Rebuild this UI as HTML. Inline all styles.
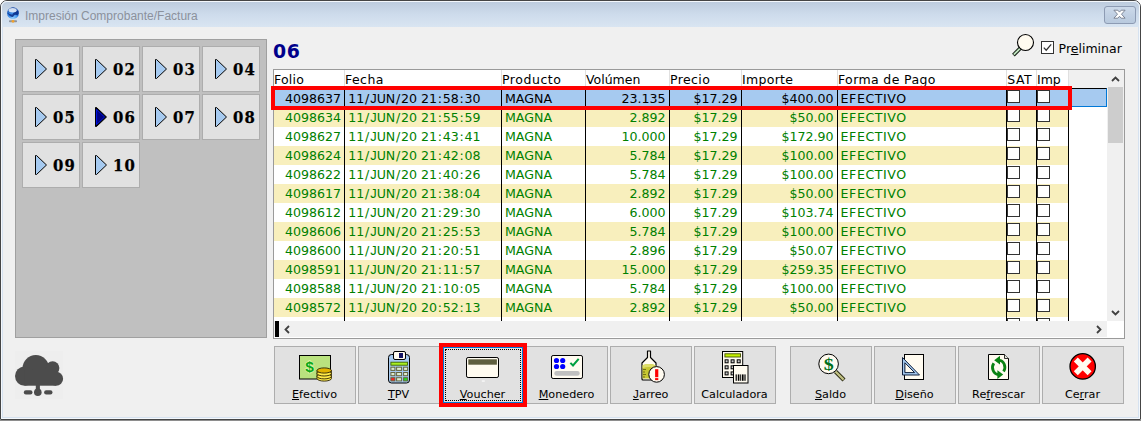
<!DOCTYPE html><html lang="es"><head><meta charset="utf-8"><title>Impresión Comprobante/Factura</title><style>
*{box-sizing:border-box}
html,body{margin:0;padding:0;background:#fff;width:1141px;height:421px;overflow:hidden}
body{position:relative;font-family:"DejaVu Sans","Liberation Sans",sans-serif;font-size:12.5px;color:#000}
#win{position:absolute;left:0;top:0;width:1141px;height:421px;overflow:hidden;background:linear-gradient(#fff 419px,#8e8e8e 420px)}
#frame{position:absolute;left:0;top:0;width:1141px;height:420px;border:1px solid #454545;border-radius:7px 7px 1px 1px;background:#d6e2f0}
#hl{position:absolute;left:1px;top:1px;width:1139px;height:418px;border:1px solid #f4f8fc;border-radius:6px 6px 0 0;z-index:5}
#title{position:absolute;left:1px;top:1px;width:1139px;height:26px;background:linear-gradient(#bccbdd,#cddbeb 50%,#d9e5f2);border-radius:6px 6px 0 0}
#ticon{position:absolute;left:5px;top:6px}
#ttext{position:absolute;left:24px;top:8px;font-family:"Liberation Sans",sans-serif;font-size:12px;color:#8b919c;white-space:nowrap}
#close{position:absolute;left:1103px;top:5px;width:32px;height:18px;border:1px solid #8d9bb3;border-radius:3px;background:linear-gradient(#cddaea,#c1d0e3 50%,#b9cade)}
#close svg{position:absolute;left:8px;top:2px}
#clientbg{position:absolute;left:3px;top:27px;width:1135px;height:390px;background:#f0f0f0}
#client{position:absolute;left:0;top:0;width:1141px;height:421px}
#client>*{position:absolute}
#panel{left:15px;top:39px;width:252px;height:299px;background:#c0c0c0;border:1px solid #a0a0a0}
.pb{position:absolute;width:58px;height:46px;background:#e1e1e1;border:1px solid #adadad;margin:-40px 0 0 -16px}
.tri{position:absolute;left:11px;top:11px}
.pn{position:absolute;left:30px;top:13px;letter-spacing:1.2px;-webkit-text-stroke:.25px #000;font-family:"DejaVu Serif Condensed","DejaVu Serif","Liberation Serif",serif;font-weight:bold;font-size:16.5px;line-height:20px;white-space:nowrap}
#cloud{left:14px;top:350px}
#big{left:273px;top:40px;letter-spacing:.7px;font-weight:bold;font-size:18.9px;line-height:22px;color:#00008b;white-space:nowrap}
#mag{left:1010px;top:32px}
#chk{left:1041px;top:41px;width:13px;height:13px}
#chk svg{display:block}
#prel{left:1058.6px;top:41px;font-size:12.5px;line-height:16px;white-space:nowrap}
#grid{left:273px;top:69px;width:852px;height:270px;background:#fff;border:1px solid #9a9a9a;overflow:hidden}
#grid>*{position:absolute}
#hdr{left:0;top:0;width:795px;height:19px;background:#fff}
#hfill{left:795px;top:0;width:39px;height:19px;background:#f0f0f0}
.hsep{top:0;width:1px;height:19px;background:#e0e0e0;margin-left:-1px}
.hc{top:1px;line-height:17px;white-space:nowrap}
.row{left:0;width:795px;height:19px;background:#fff;color:#008000}
.row.alt{background:#f8efbd}
.row.sel{background:#a6caf0;color:#000}
.c{position:absolute;top:1px;line-height:17px;white-space:nowrap;font-size:12.6px}
.c i{font-style:normal;padding:0 .73px}
.c b{font-weight:normal;font-family:"Liberation Sans",sans-serif;font-size:12.9px;padding:0 0 0 .3px}
.c.r{text-align:right}
.cb{position:absolute;top:1px;width:13px;height:13px;background:#fff;border:1px solid #333;display:block}
.vl{top:19px;width:1px;height:232px;background:#000;margin-left:-1px}
#selx{left:795px;top:18px;width:38px;height:19px;background:#a6caf0;border-top:1px solid #000;border-right:1px solid #0078d7;border-bottom:1px solid #0078d7}
#vsb{left:833px;top:0;width:17px;height:251px;background:#f0f0f0}
#vth{position:absolute;left:1px;top:17px;width:15px;height:56px;background:#cdcdcd}
.ch{position:absolute}
#hsb{left:0;top:251px;width:833px;height:16px;background:#f0f0f0}
#hblk{position:absolute;left:1px;top:0;width:4px;height:16px;background:#000}
#corner{left:833px;top:251px;width:17px;height:16px;background:#fff}
#red1{left:271px;top:86px;width:801px;height:24px;border:4px solid #f00}
#red2{left:439px;top:343px;width:88px;height:64px;border:4px solid #f00}
.bb{top:346px;width:82px;height:58px;background:#e1e1e1;box-shadow:inset 0 0 0 1px #adadad}
.bb.foc{box-shadow:inset 0 0 0 2px #0078d7}
.dots{position:absolute;left:3px;top:3px;right:3px;bottom:3px;border:1px dotted #000}
.ic{position:absolute;left:0;top:0;width:82px;height:58px}
.ic svg{position:absolute;left:0;top:0}
.bl{position:absolute;left:0;width:81px;top:41px;text-align:center;line-height:15px;font-size:11.2px;white-space:nowrap}
.bl b{line-height:0;font-weight:normal;font-family:"Liberation Sans",sans-serif;font-size:11.6px;padding:0 .4px}

</style></head><body>
<div id="win"><div id="frame"></div><div id="hl"></div>
<div id="title"><svg id="ticon" width="14" height="17" viewBox="0 0 14 17"><defs><radialGradient id="gl" cx="0.5" cy="0.9" r="0.9"><stop offset="0" stop-color="#8fd0ff"/><stop offset="0.45" stop-color="#3a8cea"/><stop offset="1" stop-color="#0c3fa0"/></radialGradient></defs><circle cx="7" cy="6.2" r="5.9" fill="url(#gl)"/><path d="M1.4 5.4 Q3.5 7.6 6.4 7.4 Q7.4 5 12.4 3.6 Q13.3 6 11.6 8.4 Q8.6 6.6 7 10 Q3 9.5 1.4 5.4 Z" fill="#082c86" opacity=".85"/><ellipse cx="6.6" cy="3.2" rx="4" ry="2.2" fill="#fff" opacity=".8"/><rect x="3" y="13.3" width="8" height="2" rx=".8" fill="#8d929c"/><circle cx="7" cy="14.3" r="1.4" fill="#f2a22c"/></svg><span id="ttext">Impresión Comprobante/Factura</span><div id="close"><svg width="13" height="11" viewBox="0 0 13 11"><path d="M0.9 1.2 L4.8 1.2 L6.5 3.1 L8.2 1.2 L12.1 1.2 L8.5 5.2 L12.1 9.2 L8.2 9.2 L6.5 7.3 L4.8 9.2 L0.9 9.2 L4.5 5.2 Z" fill="#fff" stroke="#737b8b" stroke-width=".9" stroke-linejoin="round"/></svg></div></div>
<div id="clientbg"></div><div id="client">
<div id="panel">
<div class="pb" style="left:22px;top:46px"><svg class="tri" width="14" height="22" viewBox="0 0 14 22"><path d="M1.5 1.5 L2.5 1.5 L12.5 11 L2.5 20.5 L1.5 20.5 Z" fill="#a6caf0" stroke="#000" stroke-width="1" stroke-linejoin="round"/></svg><span class="pn">01</span></div>
<div class="pb" style="left:82px;top:46px"><svg class="tri" width="14" height="22" viewBox="0 0 14 22"><path d="M1.5 1.5 L2.5 1.5 L12.5 11 L2.5 20.5 L1.5 20.5 Z" fill="#a6caf0" stroke="#000" stroke-width="1" stroke-linejoin="round"/></svg><span class="pn">02</span></div>
<div class="pb" style="left:142px;top:46px"><svg class="tri" width="14" height="22" viewBox="0 0 14 22"><path d="M1.5 1.5 L2.5 1.5 L12.5 11 L2.5 20.5 L1.5 20.5 Z" fill="#a6caf0" stroke="#000" stroke-width="1" stroke-linejoin="round"/></svg><span class="pn">03</span></div>
<div class="pb" style="left:202px;top:46px"><svg class="tri" width="14" height="22" viewBox="0 0 14 22"><path d="M1.5 1.5 L2.5 1.5 L12.5 11 L2.5 20.5 L1.5 20.5 Z" fill="#a6caf0" stroke="#000" stroke-width="1" stroke-linejoin="round"/></svg><span class="pn">04</span></div>
<div class="pb" style="left:22px;top:94px"><svg class="tri" width="14" height="22" viewBox="0 0 14 22"><path d="M1.5 1.5 L2.5 1.5 L12.5 11 L2.5 20.5 L1.5 20.5 Z" fill="#a6caf0" stroke="#000" stroke-width="1" stroke-linejoin="round"/></svg><span class="pn">05</span></div>
<div class="pb" style="left:82px;top:94px"><svg class="tri" width="14" height="22" viewBox="0 0 14 22"><path d="M1.5 1.5 L2.5 1.5 L12.5 11 L2.5 20.5 L1.5 20.5 Z" fill="#000" stroke="#000" stroke-width="1" stroke-linejoin="round"/><path d="M2.6 3.4 L10.6 11 L2.6 18.6 Z" fill="#000080" stroke="#0018f0" stroke-width="1" stroke-linejoin="round"/></svg><span class="pn">06</span></div>
<div class="pb" style="left:142px;top:94px"><svg class="tri" width="14" height="22" viewBox="0 0 14 22"><path d="M1.5 1.5 L2.5 1.5 L12.5 11 L2.5 20.5 L1.5 20.5 Z" fill="#a6caf0" stroke="#000" stroke-width="1" stroke-linejoin="round"/></svg><span class="pn">07</span></div>
<div class="pb" style="left:202px;top:94px"><svg class="tri" width="14" height="22" viewBox="0 0 14 22"><path d="M1.5 1.5 L2.5 1.5 L12.5 11 L2.5 20.5 L1.5 20.5 Z" fill="#a6caf0" stroke="#000" stroke-width="1" stroke-linejoin="round"/></svg><span class="pn">08</span></div>
<div class="pb" style="left:22px;top:142px"><svg class="tri" width="14" height="22" viewBox="0 0 14 22"><path d="M1.5 1.5 L2.5 1.5 L12.5 11 L2.5 20.5 L1.5 20.5 Z" fill="#a6caf0" stroke="#000" stroke-width="1" stroke-linejoin="round"/></svg><span class="pn">09</span></div>
<div class="pb" style="left:82px;top:142px"><svg class="tri" width="14" height="22" viewBox="0 0 14 22"><path d="M1.5 1.5 L2.5 1.5 L12.5 11 L2.5 20.5 L1.5 20.5 Z" fill="#a6caf0" stroke="#000" stroke-width="1" stroke-linejoin="round"/></svg><span class="pn">10</span></div>
</div>
<svg id="cloud" width="50" height="50" viewBox="14 350 50 50"><rect x="15" y="351" width="48" height="48" fill="#eeeeee"/><g fill="#4c4c4c"><circle cx="35.8" cy="368.3" r="13.3"/><circle cx="52.6" cy="368" r="6.8"/><circle cx="24.6" cy="376.1" r="9.6"/><circle cx="56.1" cy="378.7" r="7"/><rect x="24.6" y="370" width="31.5" height="15.7"/><rect x="35.8" y="385" width="4.1" height="5"/><circle cx="37.8" cy="392.2" r="3.8"/><rect x="23.8" y="390.2" width="8.7" height="4.3" rx="2.1"/><rect x="44.1" y="390.2" width="8.4" height="4.3" rx="2.1"/></g></svg>
<div id="big">06</div>
<svg id="mag" width="26" height="27" viewBox="1010 32 26 27"><path d="M1020.6 47.9 L1013.4 55.1" stroke="#142014" stroke-width="3.8"/><path d="M1020.6 47.9 L1013.8 54.7" stroke="#c4e8c4" stroke-width="1.7"/><circle cx="1025.5" cy="42.5" r="8" fill="#fffbf0" stroke="#000" stroke-width="1.1"/></svg>
<div id="chk"><svg width="13" height="13" viewBox="0 0 13 13"><rect x=".5" y=".5" width="12" height="12" fill="#fff" stroke="#333"/><path d="M2.8 6.6 L5.2 9.2 L10.2 3.4" fill="none" stroke="#333" stroke-width="1.3"/></svg></div>
<div id="prel">Pr<u>e</u>liminar</div>
<div id="grid">
<div id="hdr"></div><div id="hfill"></div>
<div class="hsep" style="left:71px"></div>
<div class="hsep" style="left:228px"></div>
<div class="hsep" style="left:312px"></div>
<div class="hsep" style="left:396px"></div>
<div class="hsep" style="left:468px"></div>
<div class="hsep" style="left:564px"></div>
<div class="hsep" style="left:733px"></div>
<div class="hsep" style="left:763px"></div>
<div class="hsep" style="left:795px"></div>
<div class="hc" style="left:0px;letter-spacing:0.2px">Folio</div>
<div class="hc" style="left:71px;letter-spacing:0.45px">Fecha</div>
<div class="hc" style="left:228px;letter-spacing:0.55px">Producto</div>
<div class="hc" style="left:312px;letter-spacing:0px">Volúmen</div>
<div class="hc" style="left:396px;letter-spacing:0.4px">Precio</div>
<div class="hc" style="left:468px;letter-spacing:0.3px">Importe</div>
<div class="hc" style="left:564px;letter-spacing:0.37px">Forma de Pago</div>
<div class="hc" style="left:733.3px;letter-spacing:0.5px">SAT</div>
<div class="hc" style="left:763px;letter-spacing:0px">Imp</div>
<div class="row sel" style="top:19px">
<span class="c r" style="left:0;width:67px">4098637</span>
<span class="c" style="left:74.2px">11<i>/</i><b>J</b>UN<i>/</i>20 21<i>:</i>58<i>:</i>30</span>
<span class="c" style="left:231px">MAGNA</span>
<span class="c r" style="left:312px;width:79.6px">23.135</span>
<span class="c r" style="left:396px;width:67.6px">$17.29</span>
<span class="c r" style="left:468px;width:91.6px">$400.00</span>
<span class="c" style="left:566.6px;letter-spacing:.55px">EFECTIVO</span>
<i class="cb" style="left:733px"></i><i class="cb" style="left:763px"></i>
</div>
<div class="row alt" style="top:38px">
<span class="c r" style="left:0;width:67px">4098634</span>
<span class="c" style="left:74.2px">11<i>/</i><b>J</b>UN<i>/</i>20 21<i>:</i>55<i>:</i>59</span>
<span class="c" style="left:231px">MAGNA</span>
<span class="c r" style="left:312px;width:79.6px">2.892</span>
<span class="c r" style="left:396px;width:67.6px">$17.29</span>
<span class="c r" style="left:468px;width:91.6px">$50.00</span>
<span class="c" style="left:566.6px;letter-spacing:.55px">EFECTIVO</span>
<i class="cb" style="left:733px"></i><i class="cb" style="left:763px"></i>
</div>
<div class="row" style="top:57px">
<span class="c r" style="left:0;width:67px">4098627</span>
<span class="c" style="left:74.2px">11<i>/</i><b>J</b>UN<i>/</i>20 21<i>:</i>43<i>:</i>41</span>
<span class="c" style="left:231px">MAGNA</span>
<span class="c r" style="left:312px;width:79.6px">10.000</span>
<span class="c r" style="left:396px;width:67.6px">$17.29</span>
<span class="c r" style="left:468px;width:91.6px">$172.90</span>
<span class="c" style="left:566.6px;letter-spacing:.55px">EFECTIVO</span>
<i class="cb" style="left:733px"></i><i class="cb" style="left:763px"></i>
</div>
<div class="row alt" style="top:76px">
<span class="c r" style="left:0;width:67px">4098624</span>
<span class="c" style="left:74.2px">11<i>/</i><b>J</b>UN<i>/</i>20 21<i>:</i>42<i>:</i>08</span>
<span class="c" style="left:231px">MAGNA</span>
<span class="c r" style="left:312px;width:79.6px">5.784</span>
<span class="c r" style="left:396px;width:67.6px">$17.29</span>
<span class="c r" style="left:468px;width:91.6px">$100.00</span>
<span class="c" style="left:566.6px;letter-spacing:.55px">EFECTIVO</span>
<i class="cb" style="left:733px"></i><i class="cb" style="left:763px"></i>
</div>
<div class="row" style="top:95px">
<span class="c r" style="left:0;width:67px">4098622</span>
<span class="c" style="left:74.2px">11<i>/</i><b>J</b>UN<i>/</i>20 21<i>:</i>40<i>:</i>26</span>
<span class="c" style="left:231px">MAGNA</span>
<span class="c r" style="left:312px;width:79.6px">5.784</span>
<span class="c r" style="left:396px;width:67.6px">$17.29</span>
<span class="c r" style="left:468px;width:91.6px">$100.00</span>
<span class="c" style="left:566.6px;letter-spacing:.55px">EFECTIVO</span>
<i class="cb" style="left:733px"></i><i class="cb" style="left:763px"></i>
</div>
<div class="row alt" style="top:114px">
<span class="c r" style="left:0;width:67px">4098617</span>
<span class="c" style="left:74.2px">11<i>/</i><b>J</b>UN<i>/</i>20 21<i>:</i>38<i>:</i>04</span>
<span class="c" style="left:231px">MAGNA</span>
<span class="c r" style="left:312px;width:79.6px">2.892</span>
<span class="c r" style="left:396px;width:67.6px">$17.29</span>
<span class="c r" style="left:468px;width:91.6px">$50.00</span>
<span class="c" style="left:566.6px;letter-spacing:.55px">EFECTIVO</span>
<i class="cb" style="left:733px"></i><i class="cb" style="left:763px"></i>
</div>
<div class="row" style="top:133px">
<span class="c r" style="left:0;width:67px">4098612</span>
<span class="c" style="left:74.2px">11<i>/</i><b>J</b>UN<i>/</i>20 21<i>:</i>29<i>:</i>30</span>
<span class="c" style="left:231px">MAGNA</span>
<span class="c r" style="left:312px;width:79.6px">6.000</span>
<span class="c r" style="left:396px;width:67.6px">$17.29</span>
<span class="c r" style="left:468px;width:91.6px">$103.74</span>
<span class="c" style="left:566.6px;letter-spacing:.55px">EFECTIVO</span>
<i class="cb" style="left:733px"></i><i class="cb" style="left:763px"></i>
</div>
<div class="row alt" style="top:152px">
<span class="c r" style="left:0;width:67px">4098606</span>
<span class="c" style="left:74.2px">11<i>/</i><b>J</b>UN<i>/</i>20 21<i>:</i>25<i>:</i>53</span>
<span class="c" style="left:231px">MAGNA</span>
<span class="c r" style="left:312px;width:79.6px">5.784</span>
<span class="c r" style="left:396px;width:67.6px">$17.29</span>
<span class="c r" style="left:468px;width:91.6px">$100.00</span>
<span class="c" style="left:566.6px;letter-spacing:.55px">EFECTIVO</span>
<i class="cb" style="left:733px"></i><i class="cb" style="left:763px"></i>
</div>
<div class="row" style="top:171px">
<span class="c r" style="left:0;width:67px">4098600</span>
<span class="c" style="left:74.2px">11<i>/</i><b>J</b>UN<i>/</i>20 21<i>:</i>20<i>:</i>51</span>
<span class="c" style="left:231px">MAGNA</span>
<span class="c r" style="left:312px;width:79.6px">2.896</span>
<span class="c r" style="left:396px;width:67.6px">$17.29</span>
<span class="c r" style="left:468px;width:91.6px">$50.07</span>
<span class="c" style="left:566.6px;letter-spacing:.55px">EFECTIVO</span>
<i class="cb" style="left:733px"></i><i class="cb" style="left:763px"></i>
</div>
<div class="row alt" style="top:190px">
<span class="c r" style="left:0;width:67px">4098591</span>
<span class="c" style="left:74.2px">11<i>/</i><b>J</b>UN<i>/</i>20 21<i>:</i>11<i>:</i>57</span>
<span class="c" style="left:231px">MAGNA</span>
<span class="c r" style="left:312px;width:79.6px">15.000</span>
<span class="c r" style="left:396px;width:67.6px">$17.29</span>
<span class="c r" style="left:468px;width:91.6px">$259.35</span>
<span class="c" style="left:566.6px;letter-spacing:.55px">EFECTIVO</span>
<i class="cb" style="left:733px"></i><i class="cb" style="left:763px"></i>
</div>
<div class="row" style="top:209px">
<span class="c r" style="left:0;width:67px">4098588</span>
<span class="c" style="left:74.2px">11<i>/</i><b>J</b>UN<i>/</i>20 21<i>:</i>10<i>:</i>05</span>
<span class="c" style="left:231px">MAGNA</span>
<span class="c r" style="left:312px;width:79.6px">5.784</span>
<span class="c r" style="left:396px;width:67.6px">$17.29</span>
<span class="c r" style="left:468px;width:91.6px">$100.00</span>
<span class="c" style="left:566.6px;letter-spacing:.55px">EFECTIVO</span>
<i class="cb" style="left:733px"></i><i class="cb" style="left:763px"></i>
</div>
<div class="row alt" style="top:228px">
<span class="c r" style="left:0;width:67px">4098572</span>
<span class="c" style="left:74.2px">11<i>/</i><b>J</b>UN<i>/</i>20 20<i>:</i>52<i>:</i>13</span>
<span class="c" style="left:231px">MAGNA</span>
<span class="c r" style="left:312px;width:79.6px">2.892</span>
<span class="c r" style="left:396px;width:67.6px">$17.29</span>
<span class="c r" style="left:468px;width:91.6px">$50.00</span>
<span class="c" style="left:566.6px;letter-spacing:.55px">EFECTIVO</span>
<i class="cb" style="left:733px"></i><i class="cb" style="left:763px"></i>
</div>
<div class="row" style="top:247px;height:4px;overflow:hidden"><i class="cb" style="left:733px"></i><i class="cb" style="left:763px"></i></div>
<div id="selx"></div>
<div class="vl" style="left:71px"></div>
<div class="vl" style="left:228px"></div>
<div class="vl" style="left:312px"></div>
<div class="vl" style="left:396px"></div>
<div class="vl" style="left:468px"></div>
<div class="vl" style="left:564px"></div>
<div class="vl" style="left:733px"></div>
<div class="vl" style="left:763px"></div>
<div class="vl" style="left:795px"></div>
<div id="vsb"><div id="vth"></div><svg class="ch" style="left:4px;top:6px" width="9" height="6" viewBox="0 0 9 6"><path d="M1 5 L4.5 1.5 L8 5" fill="none" stroke="#404040" stroke-width="1.8"/></svg><svg class="ch" style="left:4px;bottom:5px" width="9" height="6" viewBox="0 0 9 6"><path d="M1 1 L4.5 4.5 L8 1" fill="none" stroke="#404040" stroke-width="1.8"/></svg></div>
<div id="hsb"><div id="hblk"></div><svg class="ch" style="left:10px;top:4px" width="6" height="9" viewBox="0 0 6 9"><path d="M5 1 L1.5 4.5 L5 8" fill="none" stroke="#404040" stroke-width="1.8"/></svg><svg class="ch" style="right:5px;top:4px" width="6" height="9" viewBox="0 0 6 9"><path d="M1 1 L4.5 4.5 L1 8" fill="none" stroke="#404040" stroke-width="1.8"/></svg></div>
<div id="corner"></div>
</div>
<div id="red1"></div>
<div class="bb" style="left:274px"><div class="ic"><svg width="82" height="58" viewBox="0 0 82 58"><rect x="25.5" y="9.5" width="31" height="23.5" fill="#b9e27e" stroke="#000"/><text x="35.6" y="26.2" text-anchor="middle" font-family="Liberation Sans,sans-serif" font-weight="bold" font-size="15.5" fill="#08a818" stroke="#e4f6a8" stroke-width="1.3" paint-order="stroke">$</text><g stroke="#2c2400" stroke-width=".9" fill="#ffea48"><path d="M43 24.5 v8 a7.2 2.6 0 0 0 14.4 0 v-8 z"/><ellipse cx="50.2" cy="30.3" rx="7.2" ry="2.6" fill="#ffea48"/><ellipse cx="50.2" cy="27.4" rx="7.2" ry="2.6" fill="#ffea48"/><ellipse cx="50.2" cy="24.5" rx="7.2" ry="2.6" fill="#e2b400"/></g></svg></div><div class="bl"><u>E</u>fectivo</div></div>
<div class="bb" style="left:358px"><div class="ic"><svg width="82" height="58" viewBox="0 0 82 58"><rect x="30.5" y="8.5" width="21" height="28.5" rx="3" fill="#a6caf0" stroke="#000"/><rect x="35.5" y="5.5" width="12" height="8" rx="1.5" fill="#fffbf0" stroke="#000"/><rect x="41" y="7" width="4" height="5" fill="#141464"/><rect x="32.9" y="16.2" width="16.6" height="3" fill="#a8f020" stroke="#3c6400" stroke-width=".9"/><rect x="32.9" y="21.2" width="4.0" height="3.2" fill="#dcebd0" stroke="#66663f" stroke-width="1"/><rect x="38.6" y="21.2" width="5.0" height="3.2" fill="#dcebd0" stroke="#66663f" stroke-width="1"/><rect x="45.6" y="21.2" width="4.0" height="3.2" fill="#dcebd0" stroke="#66663f" stroke-width="1"/><rect x="32.9" y="26.5" width="4.0" height="3.2" fill="#dcebd0" stroke="#66663f" stroke-width="1"/><rect x="38.6" y="26.5" width="5.0" height="3.2" fill="#dcebd0" stroke="#66663f" stroke-width="1"/><rect x="45.6" y="26.5" width="4.0" height="3.2" fill="#dcebd0" stroke="#66663f" stroke-width="1"/><rect x="32.9" y="31.7" width="4.0" height="3.2" fill="#ff2020" stroke="#66663f" stroke-width="1"/><rect x="38.6" y="31.7" width="5.0" height="3.2" fill="#dcebd0" stroke="#66663f" stroke-width="1"/><rect x="45.6" y="31.7" width="4.0" height="3.2" fill="#20e020" stroke="#66663f" stroke-width="1"/></svg></div><div class="bl"><u>T</u>PV</div></div>
<div class="bb foc" style="left:442px"><div class="dots"></div><div class="ic"><svg width="82" height="58" viewBox="0 0 82 58"><rect x="24.5" y="11.5" width="32" height="20" rx="1.6" fill="#fffbf0" stroke="#000"/><rect x="26.3" y="13.3" width="28.6" height="5.4" fill="#5f5f3f"/><rect x="39.8" y="34.5" width="3" height="1.1" fill="#fff"/></svg></div><div class="bl"><u>V</u>oucher</div></div>
<div class="bb" style="left:526px"><div class="ic"><svg width="82" height="58" viewBox="0 0 82 58"><rect x="25.5" y="9.5" width="31" height="23" rx="1.6" fill="#fffbf0" stroke="#000"/><g fill="#0000ff"><circle cx="30.5" cy="14.5" r="2.6"/><circle cx="36.7" cy="14.5" r="2.6"/><circle cx="30.5" cy="20.5" r="2.6"/><circle cx="36.7" cy="20.5" r="2.6"/></g><path d="M44.4 16.9 L47 19.5 L52.7 12.8" fill="none" stroke="#00a040" stroke-width="2"/><rect x="28.3" y="25" width="25.4" height="4.7" rx="2.3" fill="#c0c0c0"/></svg></div><div class="bl"><u>M</u>onedero</div></div>
<div class="bb" style="left:610px"><div class="ic"><svg width="82" height="58" viewBox="0 0 82 58"><path d="M37.5 5 h3 v6.5 l5.5 5.5 v16 q0 1 -1 1 h-12 q-1 0 -1 -1 v-16 l5.5 -5.5 z" fill="#fffbf0" stroke="#000" stroke-width="1.2" stroke-linejoin="round"/><path d="M32.6 19.2 q6.4 -2.2 12.8 0 v13.3 h-12.8 z" fill="#c6c632"/><path d="M32.6 19.2 q6.4 -2.2 12.8 0 v3 q-6.4 -2.2 -12.8 0 z" fill="#dede6a"/><path d="M33 23.5 h3 M33 26 h2 M33 28.5 h3 M33 31 h2" stroke="#6a6a10" stroke-width=".9"/><circle cx="46.6" cy="28.4" r="7.8" fill="#fffbf0" stroke="#000"/><rect x="45.1" y="23.2" width="3.2" height="8" fill="#ff0000"/><rect x="45.1" y="32.1" width="3.2" height="2" fill="#ff0000"/></svg></div><div class="bl"><u><b>J</b></u>arreo</div></div>
<div class="bb" style="left:694px"><div class="ic"><svg width="82" height="58" viewBox="0 0 82 58"><rect x="28.5" y="5.5" width="20.2" height="26" fill="#fffbf0" stroke="#000"/><rect x="30.9" y="7.8" width="15.6" height="3.2" fill="#c4f000" stroke="#405000" stroke-width=".9"/><rect x="30.6" y="13.3" width="4" height="4" fill="#000"/><rect x="31.6" y="14.3" width="2" height="2" fill="#c8c8c8"/><rect x="36.6" y="13.3" width="4" height="4" fill="#000"/><rect x="37.6" y="14.3" width="2" height="2" fill="#c8c8c8"/><rect x="42.7" y="13.3" width="4" height="4" fill="#000"/><rect x="43.7" y="14.3" width="2" height="2" fill="#c8c8c8"/><rect x="30.6" y="19.3" width="4" height="4" fill="#000"/><rect x="31.6" y="20.3" width="2" height="2" fill="#c8c8c8"/><rect x="36.6" y="19.3" width="4" height="4" fill="#000"/><rect x="37.6" y="20.3" width="2" height="2" fill="#c8c8c8"/><rect x="42.7" y="19.3" width="4" height="4" fill="#000"/><rect x="43.7" y="20.3" width="2" height="2" fill="#c8c8c8"/><rect x="30.6" y="25.4" width="4" height="4" fill="#000"/><rect x="31.6" y="26.4" width="2" height="2" fill="#c8c8c8"/><rect x="36.6" y="25.4" width="4" height="4" fill="#000"/><rect x="37.6" y="26.4" width="2" height="2" fill="#c8c8c8"/><rect x="42.7" y="25.4" width="4" height="4" fill="#000"/><rect x="43.7" y="26.4" width="2" height="2" fill="#c8c8c8"/><rect x="39.5" y="19.5" width="14.5" height="17.5" fill="#fffbf0" stroke="#000"/><rect x="41.6" y="28.4" width="1.2" height="6.4" fill="#000"/><rect x="43.8" y="28.4" width="1.6" height="6.4" fill="#000"/><rect x="46.2" y="28.4" width="1.0" height="6.4" fill="#000"/><rect x="48.0" y="28.4" width="1.6" height="6.4" fill="#000"/><rect x="50.4" y="28.4" width="1.2" height="6.4" fill="#000"/></svg></div><div class="bl">Calculadora</div></div>
<div class="bb" style="left:790px"><div class="ic"><svg width="82" height="58" viewBox="0 0 82 58"><path d="M45.5 25.5 L54 34" stroke="#2a2a10" stroke-width="4.2"/><path d="M45.5 25.5 L53.6 33.6" stroke="#c2c285" stroke-width="2.2"/><circle cx="38.6" cy="17.9" r="9.8" fill="#fffbf0" stroke="#000"/><text transform="translate(38.8 24) scale(1.25 1)" text-anchor="middle" font-family="Liberation Serif,serif" font-weight="bold" font-size="16" fill="#00701a">$</text></svg></div><div class="bl"><u>S</u>aldo</div></div>
<div class="bb" style="left:874px"><div class="ic"><svg width="82" height="58" viewBox="0 0 82 58"><rect x="30.5" y="8.5" width="19" height="25" fill="#fffbf0" stroke="#000"/><path d="M28.5 11.5 L28.5 29 L45.5 29 Z M30.9 16.8 L30.9 26.6 L40.6 26.6 Z" fill="#a6caf0" fill-rule="evenodd" stroke="#10203c" stroke-width="1" stroke-linejoin="round"/></svg></div><div class="bl"><u>D</u>iseño</div></div>
<div class="bb" style="left:958px"><div class="ic"><svg width="82" height="58" viewBox="0 0 82 58"><path d="M30.5 8.5 H46.5 L50.5 12.5 V33.5 H30.5 Z" fill="#fffbf0" stroke="#000" stroke-linejoin="round"/><path d="M46.5 8.5 V12.5 H50.5" fill="#e4e4dc" stroke="#000" stroke-width=".8"/><g fill="none" stroke="#0a8212" stroke-width="2.8"><path d="M45.6 25.6 A5.9 7 0 0 0 41 14.3"/><path d="M35.8 17.2 A5.9 7 0 0 0 40.4 28.5"/></g><path d="M42 9.8 L36.2 14.3 L42 18.6 Z" fill="#0a8212"/><path d="M39.4 24.2 L45.2 28.6 L39.4 33 Z" fill="#0a8212"/></svg></div><div class="bl">Re<u>f</u>rescar</div></div>
<div class="bb" style="left:1042px"><div class="ic"><svg width="82" height="58" viewBox="0 0 82 58"><circle cx="40.7" cy="20.4" r="12.7" fill="#ff0000" stroke="#000" stroke-width="1.3"/><path d="M33.8 13.5 L47.6 27.3 M47.6 13.5 L33.8 27.3" stroke="#fffbf0" stroke-width="5.6"/></svg></div><div class="bl">Ce<u>r</u>rar</div></div>
<div id="red2"></div>
</div></div></body></html>
